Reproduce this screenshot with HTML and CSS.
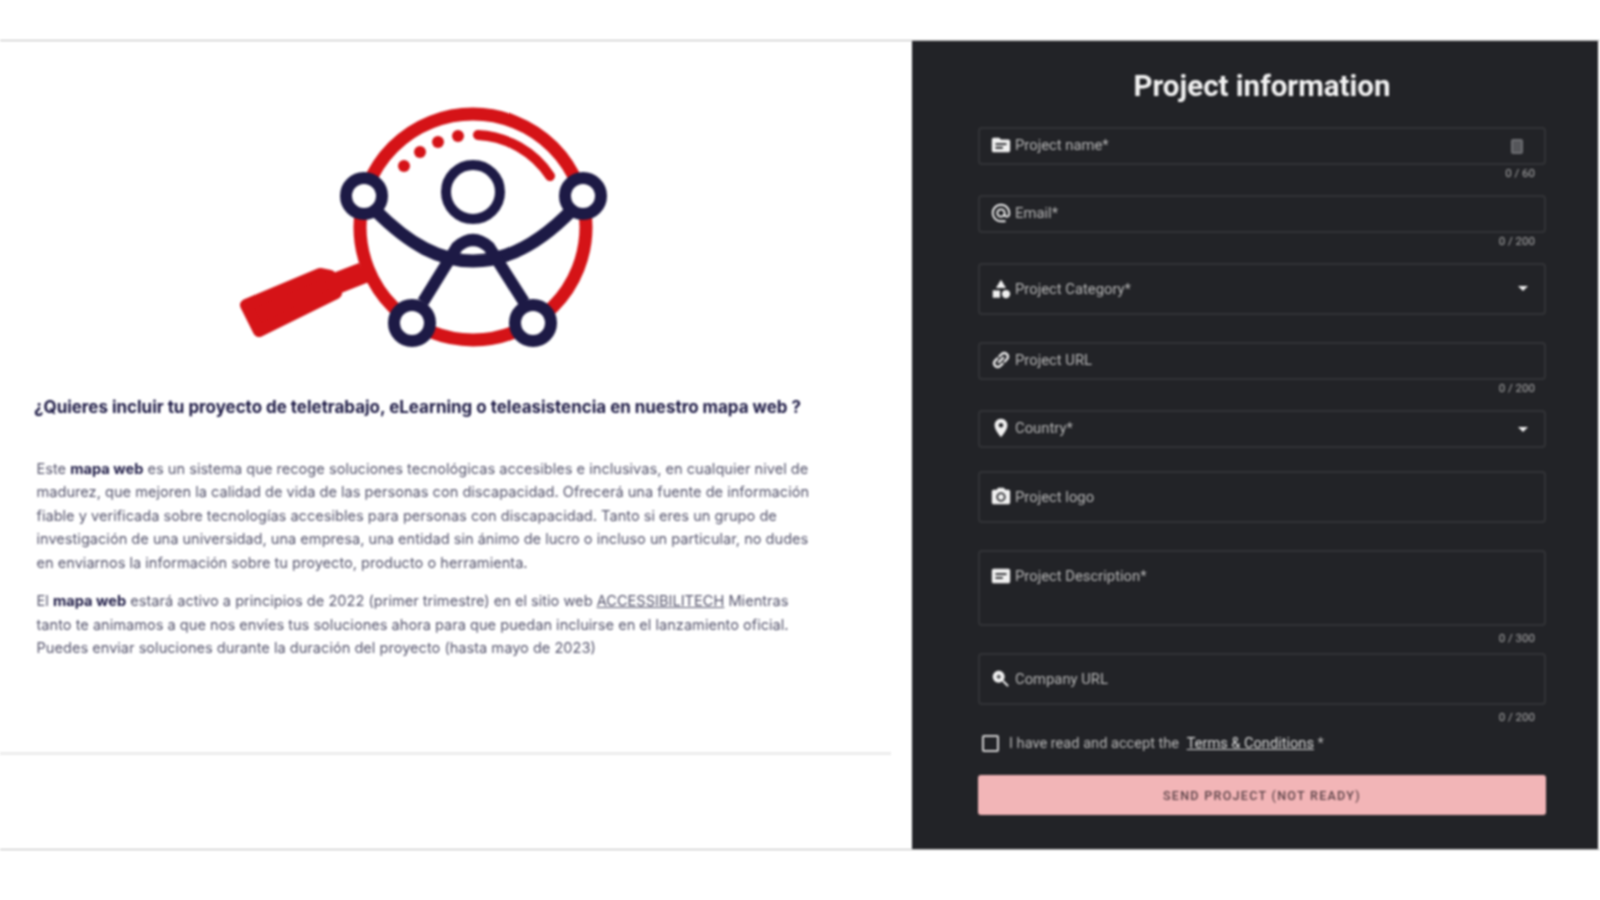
FILE: index.html
```html
<!DOCTYPE html>
<html lang="en">
<head>
  <meta charset="UTF-8">
  <title>Project information</title>
  <link rel="stylesheet" href="styles.css">
</head>
<body>
  <div class="page">
    <!-- Left column: logo and intro text -->
    <section class="intro">
      <svg class="logo" viewBox="0 0 400 280" width="400" height="280">
        <g fill="none" stroke="#d51317">
          <circle cx="253" cy="137" r="113" stroke-width="13"/>
          <path d="M258 45A92 92 0 0 1 330 86" stroke-width="10" stroke-linecap="round"/>
        </g>
        <g fill="#d51317">
          <circle cx="184" cy="76" r="6"/>
          <circle cx="200" cy="62" r="6"/>
          <circle cx="218" cy="52" r="6"/>
          <circle cx="238" cy="46" r="6"/>
          <path d="M108 185L139 173L149 192L116 205Z"/>
          <path d="M26 215L100 184L110 186L116 203L39 241Z" stroke="#d51317" stroke-width="12" stroke-linejoin="round"/>
        </g>
        <g fill="#fff" stroke="#1d1a45">
          <path d="M155 120C190 155 220 171 253 171S318 155 352 120" fill="none" stroke-width="13"/>
          <path d="M203 212L237 157Q253 143 269 157L304 212" fill="none" stroke-width="12"/>
          <circle cx="253" cy="102" r="27" stroke-width="10"/>
          <circle cx="144" cy="106" r="18" stroke-width="12"/>
          <circle cx="363" cy="106" r="18" stroke-width="12"/>
          <circle cx="192" cy="233" r="18" stroke-width="12"/>
          <circle cx="313" cy="233" r="18" stroke-width="12"/>
        </g>
      </svg>
      <h2 class="intro-title">¿Quieres incluir tu proyecto de teletrabajo, eLearning o teleasistencia en nuestro mapa web ?</h2>
      <p class="intro-text">Este <strong>mapa web</strong> es un sistema que recoge soluciones tecnológicas accesibles e inclusivas, en cualquier nivel de<br>madurez, que mejoren la calidad de vida de las personas con discapacidad. Ofrecerá una fuente de información<br>fiable y verificada sobre tecnologías accesibles para personas con discapacidad. Tanto si eres un grupo de<br>investigación de una universidad, una empresa, una entidad sin ánimo de lucro o incluso un particular, no dudes<br>en enviarnos la información sobre tu proyecto, producto o herramienta.</p>
      <p class="intro-text">El <strong>mapa web</strong> estará activo a principios de 2022 (primer trimestre) en el sitio web <a href="#">ACCESSIBILITECH</a> Mientras<br>tanto te animamos a que nos envíes tus soluciones ahora para que puedan incluirse en el lanzamiento oficial.<br>Puedes enviar soluciones durante la duración del proyecto (hasta mayo de 2023)</p>
      <div class="intro-rule"></div>
    </section>

    <!-- Right column: project form -->
    <section class="panel">
      <h1 class="panel-title">Project information</h1>

      <div class="row">
        <div class="field field-sm">
          <svg class="icon" viewBox="0 0 24 24"><path d="M20 6h-8l-2-2H4c-1.1 0-1.99.9-1.99 2L2 18c0 1.1.9 2 2 2h16c1.1 0 2-.9 2-2V8c0-1.1-.9-2-2-2zm-6 10H6v-2h8v2zm4-4H6v-2h12v2z"/></svg>
          <span class="label">Project name*</span>
          <span class="paste-icon"></span>
        </div>
        <div class="counter">0 / 60</div>
      </div>

      <div class="row">
        <div class="field field-sm">
          <svg class="icon" viewBox="0 0 24 24"><path d="M12 2C6.48 2 2 6.48 2 12s4.48 10 10 10h5v-2h-5c-4.34 0-8-3.66-8-8s3.66-8 8-8 8 3.66 8 8v1.43c0 .79-.71 1.57-1.5 1.57s-1.5-.78-1.5-1.57V12c0-2.76-2.24-5-5-5s-5 2.24-5 5 2.24 5 5 5c1.38 0 2.64-.56 3.54-1.47.65.89 1.77 1.47 2.96 1.47 1.97 0 3.5-1.6 3.5-3.57V12c0-5.52-4.48-10-10-10zm0 13c-1.66 0-3-1.34-3-3s1.34-3 3-3 3 1.34 3 3-1.34 3-3 3z"/></svg>
          <span class="label">Email*</span>
        </div>
        <div class="counter">0 / 200</div>
      </div>

      <div class="row row-plain">
        <div class="field field-md">
          <svg class="icon" viewBox="0 0 24 24"><path d="M12 2l-5.5 9h11z"/><circle cx="17.5" cy="17.5" r="4.5"/><path d="M3 13.5h8v8H3z"/></svg>
          <span class="label">Project Category*</span>
          <span class="caret"></span>
        </div>
      </div>

      <div class="row">
        <div class="field field-sm">
          <svg class="icon" viewBox="0 0 24 24"><path transform="rotate(-45 12 12)" stroke="#f0f0f0" stroke-width=".8" d="M3.9 12c0-1.71 1.39-3.1 3.1-3.1h4V7H7c-2.76 0-5 2.24-5 5s2.24 5 5 5h4v-1.9H7c-1.71 0-3.1-1.39-3.1-3.1zM8 13h8v-2H8v2zm9-6h-4v1.9h4c1.71 0 3.1 1.39 3.1 3.1s-1.39 3.1-3.1 3.1h-4V17h4c2.76 0 5-2.24 5-5s-2.24-5-5-5z"/></svg>
          <span class="label">Project URL</span>
        </div>
        <div class="counter">0 / 200</div>
      </div>

      <div class="row row-plain row-tight">
        <div class="field field-sm">
          <svg class="icon" viewBox="0 0 24 24"><path d="M12 2C8.13 2 5 5.13 5 9c0 5.25 7 13 7 13s7-7.75 7-13c0-3.87-3.13-7-7-7zm0 9.5c-1.38 0-2.5-1.12-2.5-2.5s1.12-2.5 2.5-2.5 2.5 1.12 2.5 2.5-1.12 2.5-2.5 2.5z"/></svg>
          <span class="label">Country*</span>
          <span class="caret"></span>
        </div>
      </div>

      <div class="row row-plain">
        <div class="field field-md">
          <svg class="icon" viewBox="0 0 24 24"><circle cx="12" cy="12" r="3.2"/><path d="M9 2L7.17 4H4c-1.1 0-2 .9-2 2v12c0 1.1.9 2 2 2h16c1.1 0 2-.9 2-2V6c0-1.1-.9-2-2-2h-3.17L15 2H9zm3 15c-2.76 0-5-2.24-5-5s2.24-5 5-5 5 2.24 5 5-2.24 5-5 5z"/></svg>
          <span class="label">Project logo</span>
        </div>
      </div>

      <div class="row row-low">
        <div class="field field-lg">
          <svg class="icon" viewBox="0 0 24 24"><path d="M20 4H4c-1.1 0-2 .9-2 2v12c0 1.1.9 2 2 2h16c1.1 0 2-.9 2-2V6c0-1.1-.9-2-2-2zm-6 11H6v-2h8v2zm4-4H6V9h12v2z"/></svg>
          <span class="label">Project Description*</span>
        </div>
        <div class="counter">0 / 300</div>
      </div>

      <div class="row row-low row-last">
        <div class="field field-md">
          <svg class="icon" viewBox="0 0 24 24"><path d="M15.5 14h-.79l-.28-.27C15.41 12.59 16 11.11 16 9.5 16 5.91 13.09 3 9.5 3S3 5.91 3 9.5 5.91 16 9.5 16c1.61 0 3.09-.59 4.23-1.57l.27.28v.79l5 4.99L20.49 19l-4.99-5z"/><circle cx="9.5" cy="9.5" r="5"/><path d="M7 9h5v1.2H7z" fill="#222327"/><path d="M8.9 7h1.2v5H8.9z" fill="#222327"/></svg>
          <span class="label">Company URL</span>
        </div>
        <div class="counter">0 / 200</div>
      </div>

      <div class="terms">
        <span class="checkbox"></span>
        <span>I have read and accept the <a href="#">Terms &amp; Conditions</a> *</span>
      </div>

      <button class="send-btn">Send project (not ready)</button>
    </section>
  </div>
</body>
</html>
```

FILE: styles.css
```css
/* Reset and base styles */
* {
  margin: 0;
  padding: 0;
  box-sizing: border-box;
}
html, body {
  height: 100%;
  background: #fff;
  overflow: hidden;
}
body {
  padding-top: 40px;
  font-family: 'Roboto', sans-serif;
}
/* Screenshot is slightly soft, hence the small blur */
.page {
  display: grid;
  grid-template-columns: 912px 686px;
  height: 810px;
  border-top: 1px solid #b9b9b9;
  border-bottom: 1px solid #b9b9b9;
  filter: blur(0.8px);
}

/* Left column */
.intro {
  padding-top: 49px;
  color: #55546c;
}
.logo {
  display: block;
  margin-left: 220px;
}
.intro-title {
  margin: 24px 0 37.5px 34px;
  font-family: 'Inter', sans-serif;
  font-size: 16.95px;
  line-height: 26px;
  font-weight: 700;
  color: #1d1a45;
  white-space: nowrap;
}
.intro-text {
  margin: 0 0 15px 36.5px;
  font-family: 'Inter', sans-serif;
  font-size: 14.6px;
  line-height: 23.5px;
  white-space: nowrap;
}
.intro-text strong {
  color: #1d1a45;
  font-weight: 700;
}
.intro-text a {
  color: #55546c;
}
.intro-rule {
  width: 891px;
  height: 3px;
  margin-top: 91.5px;
  background: #ececec;
}

/* Right column: dark form panel */
.panel {
  padding: 0 52px 0 66px;
  background: #222327;
  color: #b4b4b4;
}
.panel-title {
  padding-top: 25px;
  margin-bottom: 21px;
  font-size: 29.5px;
  line-height: 40px;
  font-weight: 700;
  text-align: center;
  color: #f2f2f2;
}
.row {
  margin-bottom: 12px;
}
.row-plain {
  margin-bottom: 27px;
}
.row-tight {
  margin-bottom: 23px;
}
.row-low {
  margin-bottom: 9px;
}
.row-last {
  margin-bottom: 10px;
}
.field {
  position: relative;
  display: flex;
  align-items: flex-start;
  padding: 5px 10px;
  border: 2px solid #323337;
  border-radius: 4px;
}
.field-sm {
  height: 38px;
}
.field-md {
  height: 52px;
  padding-top: 13px;
}
.field-lg {
  height: 76px;
  padding-top: 13px;
}
.icon {
  flex: none;
  width: 22px;
  height: 22px;
  margin-right: 3px;
  fill: #f0f0f0;
}
.label {
  margin-top: 2px;
  font-size: 14.8px;
  line-height: 18px;
}
.paste-icon {
  position: absolute;
  top: 10px;
  right: 21px;
  width: 12px;
  height: 15px;
  border: 2px solid #6c6d71;
  border-radius: 2px;
  background: #55565a;
}
.caret {
  position: absolute;
  top: 21px;
  right: 16px;
  border-left: 5px solid transparent;
  border-right: 5px solid transparent;
  border-top: 5px solid #f0f0f0;
}
.field-sm .caret {
  top: 15px;
}
.counter {
  height: 18px;
  padding-right: 11px;
  font-size: 11.5px;
  line-height: 16px;
  text-align: right;
  color: #a8a8a8;
}
.row-low .counter {
  padding-top: 4px;
}
.terms {
  display: flex;
  align-items: center;
  height: 20px;
  margin-bottom: 22px;
  font-size: 14.6px;
}
.terms a {
  margin-left: 4px;
  color: #d8d8d8;
}
.checkbox {
  width: 17px;
  height: 17px;
  margin: 0 10px 0 4px;
  border: 2px solid #cfcfcf;
  border-radius: 2px;
}
.send-btn {
  display: block;
  width: 100%;
  height: 40px;
  border: none;
  border-radius: 3px;
  background: #f2b5b7;
  color: #5c4348;
  font-family: 'Roboto', sans-serif;
  font-size: 12.5px;
  font-weight: 500;
  letter-spacing: 1.3px;
  text-transform: uppercase;
}
```
